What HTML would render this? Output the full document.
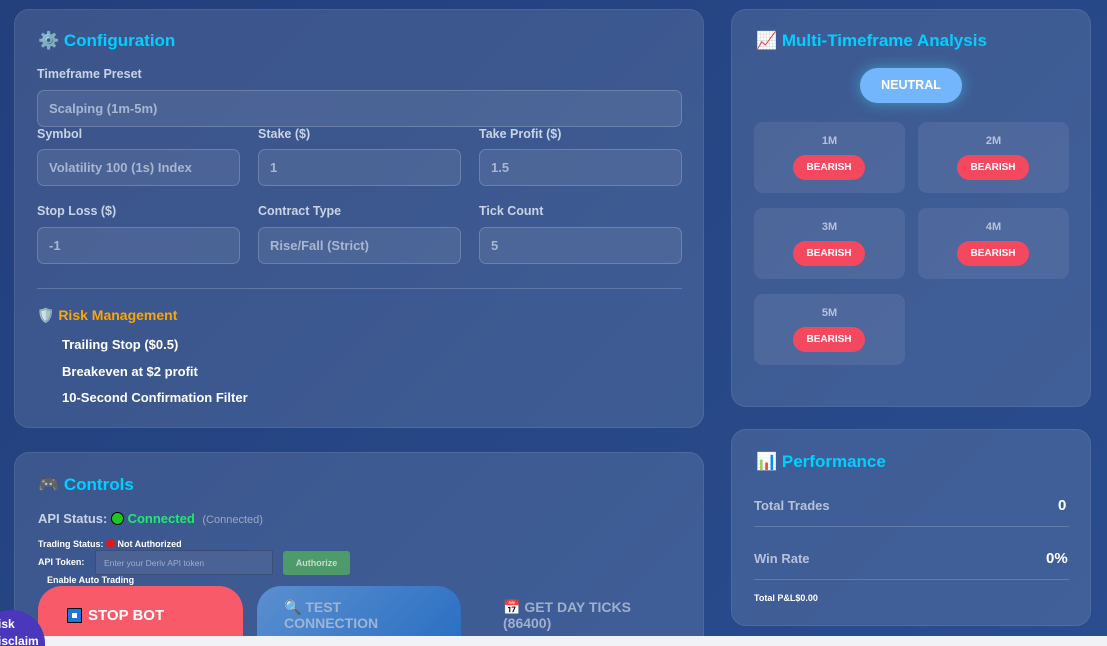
<!DOCTYPE html>
<html style="width:1107px;height:646px;overflow:hidden"><head><meta charset="utf-8"><style>
*{margin:0;padding:0;box-sizing:border-box}
body{width:1107px;height:646px;overflow:hidden;background:linear-gradient(135deg,#233f7c,#2a4d8e);font-family:"Liberation Sans","DejaVu Sans",sans-serif;position:relative;color:#fff}
.p{position:absolute;background:rgba(255,255,255,0.11);border:1px solid rgba(255,255,255,0.08);border-radius:15px}
.a{position:absolute;white-space:nowrap}
.t{font-weight:bold;font-size:17px;color:#00d0ff}
.lb{font-weight:bold;font-size:12.5px;color:#c9d3e6}
.in{position:absolute;background:rgba(255,255,255,0.08);border:1px solid rgba(255,255,255,0.18);border-radius:7px;font-size:13px;font-weight:bold;color:#a8b6d0;padding-left:11px;display:flex;align-items:center}
.ri{font-weight:bold;font-size:13px;color:#fff}
.card{position:absolute;width:151px;height:71px;background:rgba(255,255,255,0.08);border-radius:9px}
.card .l{position:absolute;top:13px;width:100%;text-align:center;font-size:11px;font-weight:bold;color:#b6c2d9}
.card .b{position:absolute;left:39px;top:33px;width:72px;height:25px;background:#f4485e;border-radius:13px;font-size:10px;font-weight:bold;color:#fff;text-align:center;line-height:25px}
.hr{position:absolute;height:1px;background:rgba(255,255,255,0.18)}
</style></head><body>
<div class="p" style="left:14px;top:9px;width:690px;height:419px"></div>
<div class="a t" style="left:38px;top:31px">⚙️ Configuration</div>
<div class="a lb" style="left:37px;top:67px">Timeframe Preset</div>
<div class="in" style="left:37px;top:90px;width:645px;height:37px">Scalping (1m-5m)</div>
<div class="a lb" style="left:37px;top:127px">Symbol</div>
<div class="a lb" style="left:258px;top:127px">Stake ($)</div>
<div class="a lb" style="left:479px;top:127px">Take Profit ($)</div>
<div class="in" style="left:37px;top:149px;width:203px;height:37px">Volatility 100 (1s) Index</div>
<div class="in" style="left:258px;top:149px;width:203px;height:37px">1</div>
<div class="in" style="left:479px;top:149px;width:203px;height:37px">1.5</div>
<div class="a lb" style="left:37px;top:204px">Stop Loss ($)</div>
<div class="a lb" style="left:258px;top:204px">Contract Type</div>
<div class="a lb" style="left:479px;top:204px">Tick Count</div>
<div class="in" style="left:37px;top:227px;width:203px;height:37px">-1</div>
<div class="in" style="left:258px;top:227px;width:203px;height:37px">Rise/Fall (Strict)</div>
<div class="in" style="left:479px;top:227px;width:203px;height:37px">5</div>
<div class="hr" style="left:37px;top:288px;width:645px"></div>
<div class="a" style="left:37px;top:307px;font-size:14px;font-weight:bold;color:#ffa500">🛡️ Risk Management</div>
<div class="a ri" style="left:62px;top:337px">Trailing Stop ($0.5)</div>
<div class="a ri" style="left:62px;top:364px">Breakeven at $2 profit</div>
<div class="a ri" style="left:62px;top:390px">10-Second Confirmation Filter</div>

<div class="p" style="left:14px;top:452px;width:690px;height:200px"></div>
<div class="a t" style="left:38px;top:475px">🎮 Controls</div>
<div class="a" style="left:38px;top:511px;font-size:13px;font-weight:bold;color:#c9d3e6">API Status: <span style="display:inline-block;width:13px;height:13px;border-radius:50%;background:#1ec81e;border:1px solid #000;vertical-align:-2px"></span> <span style="color:#1eeb6e">Connected</span> <span style="font-size:11px;color:#9aa8c3;font-weight:normal;margin-left:4px">(Connected)</span></div>
<div class="a" style="left:38px;top:539px;font-size:9px;font-weight:bold">Trading Status: <span style="display:inline-block;width:9px;height:9px;border-radius:50%;background:#e01818;vertical-align:-1px"></span> Not Authorized</div>
<div class="a" style="left:38px;top:557px;font-size:9px;font-weight:bold">API Token:</div>
<div class="a" style="left:95px;top:550px;width:178px;height:25px;background:#4a6394;border:1px solid #3a4e77;border-radius:2px;font-size:8.5px;color:#9eaccb;padding:7px 0 0 8px">Enter your Deriv API token</div>
<div class="a" style="left:283px;top:551px;width:67px;height:24px;background:#4e9a6a;border-radius:3px;font-size:9px;font-weight:bold;color:#c9d9d0;text-align:center;line-height:24px">Authorize</div>
<div class="a" style="left:47px;top:575px;font-size:9px;font-weight:bold">Enable Auto Trading</div>
<div class="a" style="left:38px;top:586px;width:205px;height:60px;background:#f95a6a;border-radius:24px 24px 0 0"></div>
<div class="a" style="left:67px;top:608px;width:15px;height:15px;background:#1a78d8;border:1px solid #000"><div style="position:absolute;left:4px;top:4px;width:5px;height:5px;background:#fff"></div></div>
<div class="a" style="left:88px;top:607px;font-size:15px;font-weight:bold">STOP BOT</div>
<div class="a" style="left:257px;top:586px;width:204px;height:60px;background:linear-gradient(135deg,#5b8fd0,#2a6fc2);border-radius:24px 24px 0 0"></div>
<div class="a" style="left:284px;top:599px;font-size:14px;font-weight:bold;color:#9fb4d4;line-height:16px">🔍 TEST<br>CONNECTION</div>
<div class="a" style="left:503px;top:599px;font-size:14px;font-weight:bold;color:#9fb0cd;line-height:16px">📅 GET DAY TICKS<br>(86400)</div>

<div class="p" style="left:731px;top:9px;width:360px;height:398px"></div>
<div class="a t" style="left:756px;top:31px">📈 Multi-Timeframe Analysis</div>
<div class="a" style="left:860px;top:68px;width:102px;height:35px;background:#74b6fb;border-radius:18px;box-shadow:0 0 14px rgba(60,200,230,0.6);text-align:center;line-height:35px;font-size:12.5px;font-weight:bold">NEUTRAL</div>
<div class="card" style="left:754px;top:122px"><div class="l">1M</div><div class="b">BEARISH</div></div>
<div class="card" style="left:918px;top:122px"><div class="l">2M</div><div class="b">BEARISH</div></div>
<div class="card" style="left:754px;top:208px"><div class="l">3M</div><div class="b">BEARISH</div></div>
<div class="card" style="left:918px;top:208px"><div class="l">4M</div><div class="b">BEARISH</div></div>
<div class="card" style="left:754px;top:294px"><div class="l">5M</div><div class="b">BEARISH</div></div>

<div class="p" style="left:731px;top:429px;width:360px;height:197px"></div>
<div class="a t" style="left:756px;top:452px">📊 Performance</div>
<div class="a" style="left:754px;top:498px;font-size:13px;font-weight:bold;color:#b6c2d9">Total Trades</div>
<div class="a" style="left:1058px;top:497px;font-size:15px;font-weight:bold">0</div>
<div class="hr" style="left:754px;top:526px;width:315px"></div>
<div class="a" style="left:754px;top:551px;font-size:13px;font-weight:bold;color:#b6c2d9">Win Rate</div>
<div class="a" style="left:1046px;top:550px;font-size:15px;font-weight:bold">0%</div>
<div class="hr" style="left:754px;top:579px;width:315px"></div>
<div class="a" style="left:754px;top:593px;font-size:9px;font-weight:bold">Total P&amp;L$0.00</div>

<div class="a" style="left:0;top:636px;width:1107px;height:10px;background:#f0f2f5"></div>
<div class="a" style="left:-22px;top:610px;width:67px;height:36px;border-radius:34px 34px 0 0;background:#4a37bb"></div>
<div class="a" style="left:-2px;top:616px;font-size:12px;font-weight:bold;line-height:17px">isk<br>isclaim</div>
</body></html>
